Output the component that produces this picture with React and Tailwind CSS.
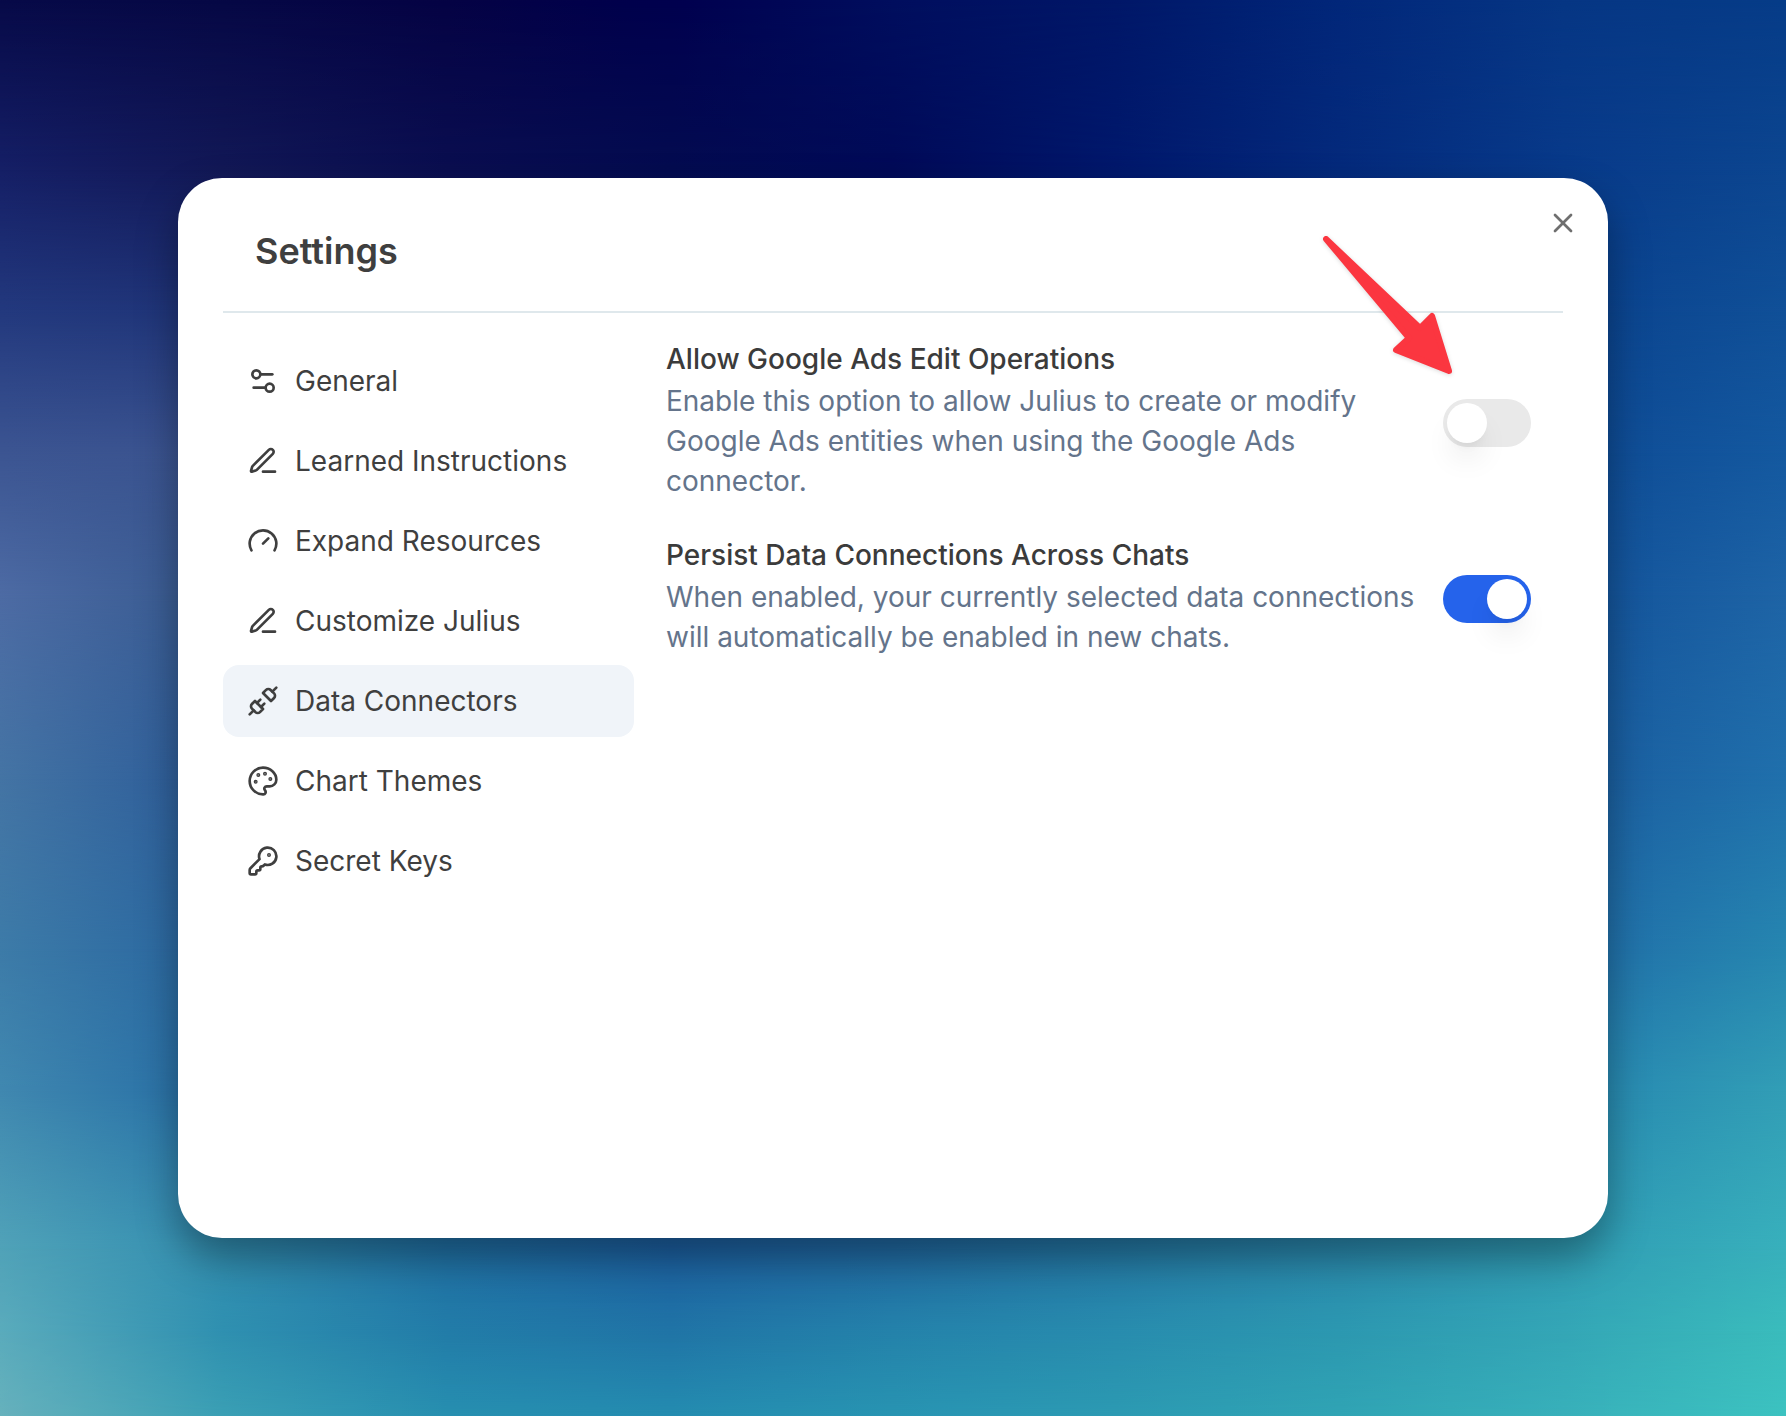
import React, { useState } from "react";
import { Settings2, Gauge, Unplug, Palette, KeyRound, X } from "lucide-react";

// wallpaper colours, one row per height, spread evenly from left to right
const ROWS = [
  { y: 0, colors: ["#070a48", "#060845", "#050344", "#00004e", "#000e5e", "#001768", "#02277a", "#063684", "#063c88"] },
  { y: 0.12, colors: ["#151f66", "#121856", "#0a0e50", "#030b50", "#000a58", "#00186c", "#042a7c", "#083a8a", "#0c4690"] },
  { y: 0.22, colors: ["#23397e", "#1f3478", "#14246c", "#10206c", "#10206c", "#10207c", "#10307c", "#0a428e", "#105098"] },
  { y: 0.32, colors: ["#3c5592", "#3a538f", "#20407c", "#20407c", "#20407c", "#20407c", "#20408a", "#0e4a94", "#1459a0"] },
  { y: 0.42, colors: ["#4d6ba4", "#36598f", "#205090", "#205090", "#205090", "#205090", "#205090", "#12529a", "#1e64a6"] },
  { y: 0.55, colors: ["#4474a4", "#2a5a98", "#205090", "#205090", "#205090", "#205090", "#205090", "#1a5c9e", "#2070ac"] },
  { y: 0.67, colors: ["#3d7ba8", "#28659f", "#2060a0", "#2060a0", "#2060a0", "#2060a0", "#2060a0", "#206ca8", "#2686b0"] },
  { y: 0.77, colors: ["#4088b0", "#256ca4", "#2060a0", "#2060a0", "#2060a0", "#2060a0", "#2068a4", "#2686b0", "#329eb6"] },
  { y: 0.88, colors: ["#50a2b8", "#328eb0", "#2070a4", "#1c5fa0", "#2068a0", "#2478a4", "#2a88ac", "#309cb4", "#38b0bc"] },
  { y: 0.94, colors: ["#5aabbc", "#2f90b0", "#227ca8", "#2074a6", "#2482aa", "#288cae", "#2c98b0", "#34a6b6", "#3abcbc"] },
  { y: 1, colors: ["#66b1bc", "#3a9fb4", "#278fb0", "#248cb0", "#2894b2", "#2c9ab2", "#30a4b4", "#38b0ba", "#3cc2c0"] },
];

function PenLine({ size = 24 }) {
  return (
    <svg
      width={size}
      height={size}
      viewBox="0 0 24 24"
      fill="none"
      stroke="currentColor"
      strokeWidth="2"
      strokeLinecap="round"
      strokeLinejoin="round"
      aria-hidden="true"
    >
      <path d="M12 20h9" />
      <path d="M16.376 3.622a1 1 0 0 1 3.002 3.002L7.368 18.635a2 2 0 0 1-.855.506l-2.872.838a.5.5 0 0 1-.62-.62l.838-2.872a2 2 0 0 1 .506-.854z" />
    </svg>
  );
}

const MENU = [
  { label: "General", icon: Settings2 },
  { label: "Learned Instructions", icon: PenLine },
  { label: "Expand Resources", icon: Gauge },
  { label: "Customize Julius", icon: PenLine },
  { label: "Data Connectors", icon: Unplug },
  { label: "Chart Themes", icon: Palette },
  { label: "Secret Keys", icon: KeyRound },
];

function Wallpaper() {
  return (
    <svg className="absolute inset-0 w-full h-full" viewBox="0 0 100 100" preserveAspectRatio="none" aria-hidden="true">
      <defs>
        {ROWS.map((row, i) => (
          <React.Fragment key={i}>
            <linearGradient id={`row-${i}`}>
              {row.colors.map((c, j) => (
                <stop key={j} offset={j / (row.colors.length - 1)} stopColor={c} />
              ))}
            </linearGradient>
            {i > 0 && (
              <>
                <linearGradient id={`fade-${i}`} x1="0" y1="0" x2="0" y2="1">
                  <stop offset={ROWS[i - 1].y} stopColor="#fff" stopOpacity="0" />
                  <stop offset={row.y} stopColor="#fff" />
                </linearGradient>
                <mask id={`mask-${i}`} maskUnits="userSpaceOnUse" x="0" y="0" width="100" height="100">
                  <rect width="100" height="100" fill={`url(#fade-${i})`} />
                </mask>
              </>
            )}
          </React.Fragment>
        ))}
      </defs>
      {ROWS.map((row, i) => (
        <rect key={i} width="100" height="100" fill={`url(#row-${i})`} mask={i > 0 ? `url(#mask-${i})` : undefined} />
      ))}
    </svg>
  );
}

function Toggle({ id, checked, onChange }) {
  return (
    <input
      id={id}
      type="checkbox"
      role="switch"
      checked={checked}
      onChange={(e) => onChange(e.target.checked)}
      className="appearance-none shrink-0 w-[88px] h-12 p-1 rounded-full bg-[#e9e9e9] checked:bg-[#2563eb] flex checked:justify-end cursor-pointer before:content-[''] before:size-10 before:rounded-full before:bg-white before:shadow-[0_20px_30px_-6px_rgba(0,0,0,0.1),0_8px_12px_-8px_rgba(0,0,0,0.1)]"
    />
  );
}

function SettingRow({ id, title, description, checked, onChange }) {
  return (
    <div className="flex items-center justify-between gap-7">
      <div className="pb-2">
        <label htmlFor={id} className="block font-medium leading-[44px] text-[#3b3b3b]">
          {title}
        </label>
        <p className="leading-10 text-[#64748b]">{description}</p>
      </div>
      <Toggle id={id} checked={checked} onChange={onChange} />
    </div>
  );
}

export default function App() {
  const [active, setActive] = useState("Data Connectors");
  const [allowEdits, setAllowEdits] = useState(false);
  const [persist, setPersist] = useState(true);

  return (
    <div className="relative min-h-screen flex p-[178px] font-[Inter,sans-serif] [font-optical-sizing:none] text-[28px] text-[#3f3f3f]">
      <Wallpaper />

      <div
        role="dialog"
        aria-label="Settings"
        className="relative flex-1 px-[45px] bg-white rounded-[44px] shadow-[0_20px_40px_rgba(0,0,0,0.35)]"
      >
        {/* header */}
        <div className="px-8 pt-12 pb-[35px] border-b-2 border-[#dfe8ec]">
          <h1 className="text-4xl leading-[50px] font-semibold">Settings</h1>
        </div>
        <button aria-label="Close" className="absolute top-[25px] right-[25px] p-1 text-[#6f6f6f] cursor-pointer">
          <X size={32} />
        </button>

        <div className="flex gap-8">
          {/* menu */}
          <nav className="w-[411px] pt-8 shrink-0 flex flex-col gap-2">
            {MENU.map(({ label, icon: Icon }) => (
              <button
                key={label}
                onClick={() => setActive(label)}
                className={`h-[72px] px-6 flex items-center gap-4 rounded-2xl text-left cursor-pointer ${
                  active === label ? "bg-[#f0f4f9]" : ""
                }`}
              >
                <Icon size={32} />
                {label}
              </button>
            ))}
          </nav>

          {/* content */}
          <div className="flex-1 pt-6 pr-8 flex flex-col gap-6">
            <SettingRow
              id="allow-edits"
              title="Allow Google Ads Edit Operations"
              description="Enable this option to allow Julius to create or modify Google Ads entities when using the Google Ads connector."
              checked={allowEdits}
              onChange={setAllowEdits}
            />
            <SettingRow
              id="persist"
              title="Persist Data Connections Across Chats"
              description="When enabled, your currently selected data connections will automatically be enabled in new chats."
              checked={persist}
              onChange={setPersist}
            />
          </div>
        </div>

        {/* pointer to the first switch */}
        <svg
          className="absolute top-[54px] right-[154px] pointer-events-none drop-shadow-sm"
          width="136"
          height="146"
          viewBox="0 0 136 146"
          fill="#fb3640"
          stroke="#fb3640"
          strokeWidth="6"
          strokeLinejoin="round"
          aria-hidden="true"
        >
          <path d="M8 7 L102 96 L114 84 L131 139 L78 118 L91 106 Z" />
        </svg>
      </div>
    </div>
  );
}
